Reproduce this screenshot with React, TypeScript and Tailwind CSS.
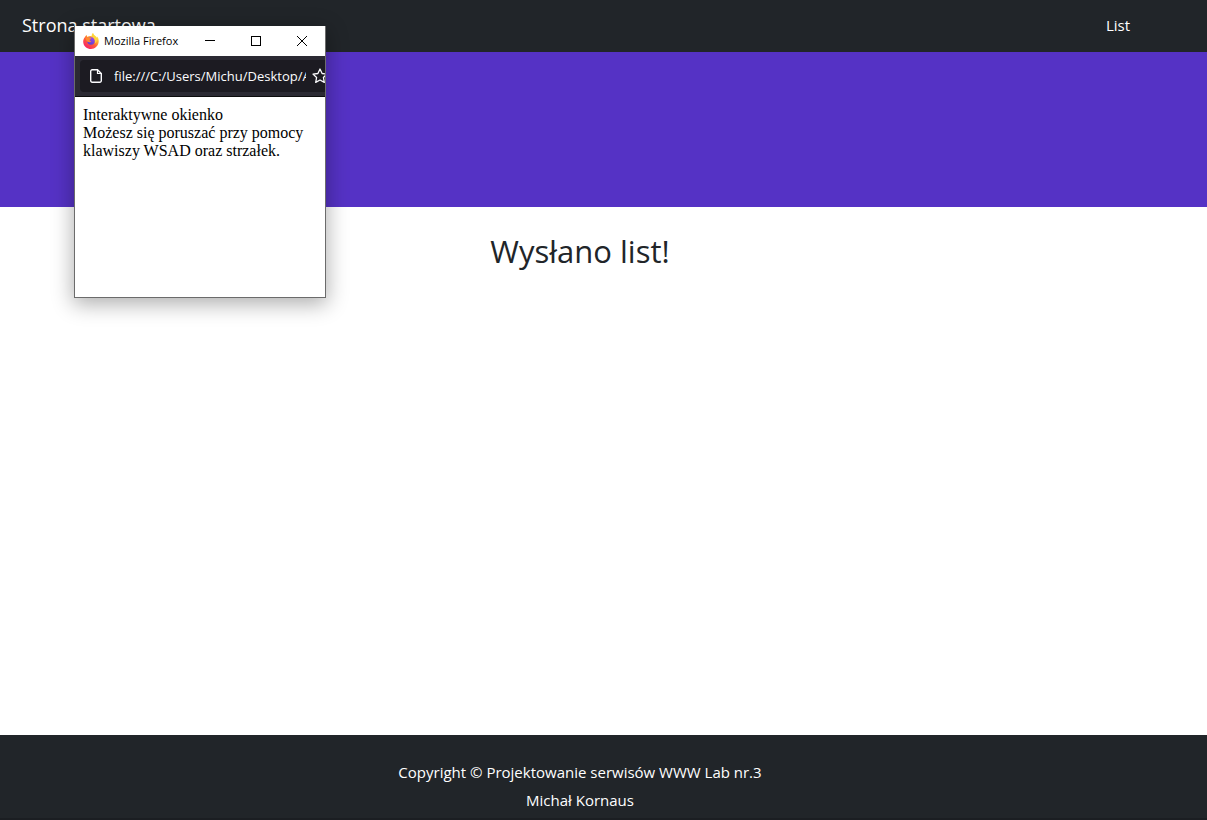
import React from "react";

function FirefoxLogo() {
  return (
    <svg viewBox="0 0 32 32" className="size-4 shrink-0" aria-hidden="true">
      <defs>
        <linearGradient id="fx-body" x1="0.85" y1="0.05" x2="0.2" y2="0.95">
          <stop offset="0.05" stopColor="#fff44f" />
          <stop offset="0.35" stopColor="#ffa930" />
          <stop offset="0.6" stopColor="#ff5b3a" />
          <stop offset="1" stopColor="#f5206a" />
        </linearGradient>
        <linearGradient id="fx-globe" x1="0.7" y1="0" x2="0.3" y2="1">
          <stop offset="0" stopColor="#a04be8" />
          <stop offset="1" stopColor="#5a3fd0" />
        </linearGradient>
      </defs>
      <path
        d="M20 0c-2 2-3 4-2.500 6.500C14 5.500 11 6 9 8 8 7 7.500 5.500 7.500 4 5.500 5 4.500 6.500 4 8 1 11.500 0 15 .5 19 1.500 27 8 32 16 32s15-6.500 15.500-15c.2-4-1-8-4-10.500.5 1.500.5 2.500.3 3.500C26 5.500 21 4.500 20 0z"
        fill="url(#fx-body)"
      />
      <circle cx="16" cy="16" r="7.500" fill="url(#fx-globe)" />
      <path
        d="M5 10c2-2 5.500-2 8 0 1.500 0 3 .2 3.500 1-.3 1.600-2.500 2-3.500 3 .2 1.500 1.500 2.200 3.500 2-1 2.200-3 2.800-5 2.200C8 17.500 5.500 14.500 5 10z"
        fill="#ff8a2c"
      />
      <path
        d="M20 0c-2 3-2.500 6 1 10 3 3 4 7 2.500 11 5-3 5.500-9 3.500-12C24 6 20.500 4 20 0z"
        fill="#ffd43c"
      />
    </svg>
  );
}

function PopupWindow() {
  return (
    <section
      aria-label="Mozilla Firefox"
      className="absolute left-[74px] top-[26px] flex h-[272px] w-[252px] flex-col border border-t-0 border-[#6b6b6b] bg-white shadow-[0_5px_20px_1px_rgba(0,0,0,0.32)]"
    >
      <header className="flex h-[30px] shrink-0 items-center bg-white pl-2 text-black">
        <FirefoxLogo />
        <span className="ml-[5px] flex-1 whitespace-nowrap font-['Open_Sans','Noto_Sans',sans-serif] text-[11px]">
          Mozilla Firefox
        </span>
        <button aria-label="Minimalizuj" className="flex h-full w-[46px] items-center justify-center">
          <svg viewBox="0 0 10 10" className="size-[10px]" shapeRendering="crispEdges">
            <path d="M0 4.500h10" stroke="black" />
          </svg>
        </button>
        <button aria-label="Maksymalizuj" className="flex h-full w-[46px] items-center justify-center">
          <svg viewBox="0 0 10 10" className="size-[10px]" shapeRendering="crispEdges">
            <path d="M.5.5h9v9h-9z" fill="none" stroke="black" />
          </svg>
        </button>
        <button aria-label="Zamknij" className="flex h-full w-[46px] items-center justify-center">
          <svg viewBox="0 0 10 10" className="size-[10px] overflow-visible">
            <path d="M0 0l10 10M10 0L0 10" stroke="black" />
          </svg>
        </button>
      </header>
      <div className="h-[41px] shrink-0 overflow-hidden border-b border-[#0c0c0d] bg-[#2b2a33] py-1 pl-[5px]">
        <div className="flex h-8 items-center rounded-l bg-[#1c1b22] pl-[10px] text-[#fbfbfe]">
          <svg viewBox="0 0 12 14" className="h-[14px] w-3 shrink-0" fill="none" stroke="currentColor" aria-hidden="true">
            <path d="M2.200.7h5.300l3.800 3.800v7.300a1.500 1.500 0 0 1-1.500 1.500H2.200a1.500 1.500 0 0 1-1.500-1.500V2.200A1.500 1.500 0 0 1 2.200.7z" strokeWidth="1.400" />
            <path d="M7.500.7v3.800h3.800" strokeWidth="1.200" />
          </svg>
          <input
            aria-label="Adres"
            readOnly
            defaultValue="file:///C:/Users/Michu/Desktop/Aplikacja"
            className="ml-3 w-[192px] shrink-0 bg-transparent pt-[2px] font-['Open_Sans','Noto_Sans',sans-serif] text-[13px] outline-none"
          />
          <button aria-label="Dodaj zakładkę" className="ml-[6px] size-4 shrink-0">
            <svg viewBox="0 0 16 16" className="size-4" fill="none" stroke="currentColor" strokeWidth="1.300" strokeLinejoin="round">
              <path d="M8 1l2.100 4.500 4.900.6-3.600 3.400.9 4.900L8 12l-4.300 2.400.9-4.900L1 6.100l4.900-.6z" />
            </svg>
          </button>
        </div>
      </div>
      <p className="p-2 pt-[9px] font-['Liberation_Serif',serif] text-[16px] leading-[18px] text-black">
        Interaktywne okienko
        <br />
        Możesz się poruszać przy pomocy klawiszy WSAD oraz strzałek.
      </p>
    </section>
  );
}

export default function App() {
  return (
    <div className="relative flex min-h-screen flex-col bg-white font-['Open_Sans','Noto_Sans',sans-serif] text-[15px] text-[#212529]">
      <nav className="flex h-[52px] items-center justify-between bg-[#212529] pb-[2px] pl-[22px] pr-[77px] text-white">
        <a href="#start" className="text-[18px]">
          Strona startowa
        </a>
        <a href="#list">List</a>
      </nav>
      <div className="h-[155px] bg-[#5532c5]" />
      <main className="flex-1 pr-[47px] pt-6 text-center">
        <h1 className="text-[31px] leading-[40px]">Wysłano list!</h1>
      </main>
      <footer className="h-[85px] border-b-2 border-[#1b1e22] bg-[#212529] pr-[47px] pt-[23px] text-center leading-7 text-white">
        <p>Copyright © Projektowanie serwisów WWW Lab nr.3</p>
        <p>Michał Kornaus</p>
      </footer>
      <PopupWindow />
    </div>
  );
}
